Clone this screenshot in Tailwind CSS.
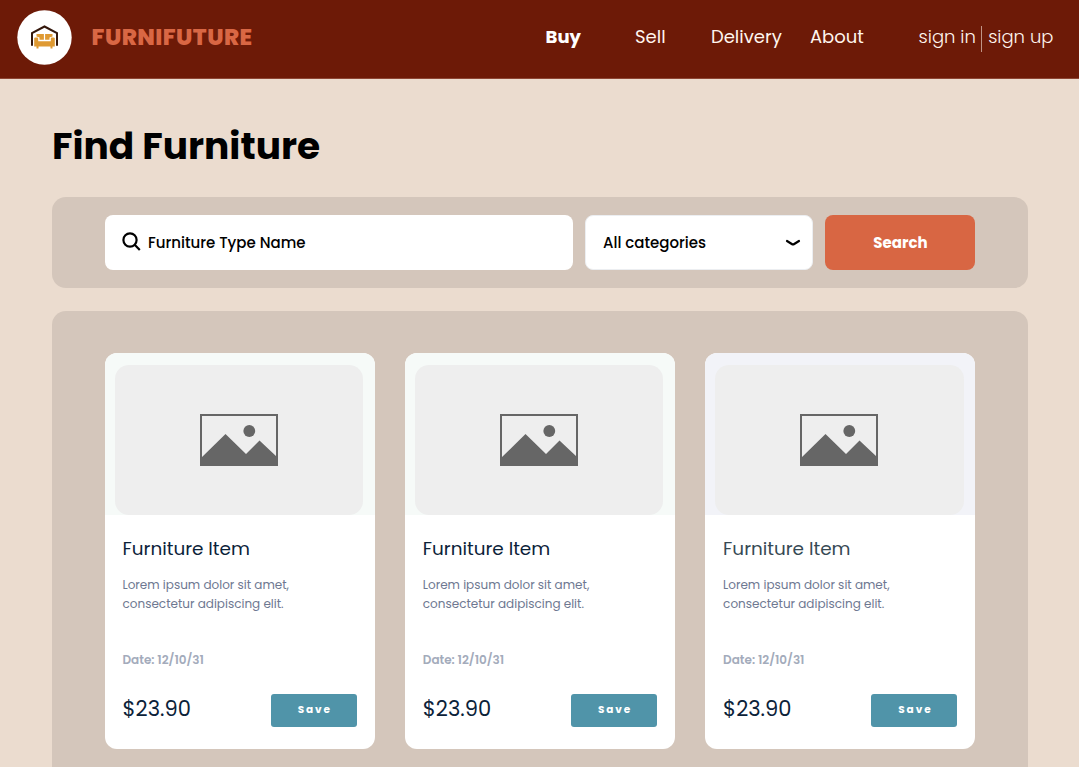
<!DOCTYPE html>
<html lang="en">
<head>
<meta charset="utf-8">
<title>Furnifuture</title>
<script src="https://cdn.jsdelivr.net/npm/@tailwindcss/browser@4"></script>
</head>
<body class="h-[767px] overflow-hidden bg-[#ebdccf] font-['Poppins','Inter',sans-serif] text-black">
<svg class="hidden">
  <symbol id="picture" viewBox="0 0 78 52">
    <rect x="1" y="1" width="76" height="50" fill="none" stroke="#666" stroke-width="2"/>
    <path d="M1 44L25.5 20L46 40L59.500 26.500L77 43V51H1Z" fill="#666"/>
    <circle cx="49.300" cy="17" r="5.900" fill="#666"/>
  </symbol>
</svg>

<header class="flex h-[79px] items-start border-b border-[#8d4634] bg-[#6d1a07] text-[18px] leading-[30px] whitespace-nowrap text-[#fff5ee]">
  <svg class="mt-[10px] ml-[17px] h-[55px] w-[55px] shrink-0" viewBox="0 0 55 55">
    <circle cx="27.500" cy="27.500" r="27.200" fill="#fff"/>
    <g transform="translate(11 10)">
      <path d="M4 25.800V13L16.500 6.500L29 13V25.800" fill="none" stroke="#34180c" stroke-width="2"/>
      <path d="M8.500 14H15.900V19.800H11.500V17.500L8.500 16.500ZM17.100 14H24.500V16.500L21.500 17.500V19.800H17.100Z" fill="#df9a33"/>
      <path d="M6.200 18.300Q6.200 17.500 7.500 17.500H9.200Q10.200 17.500 10.200 18.500V21.200H22.800V18.500Q22.800 17.500 23.800 17.500H25.500Q26.800 17.500 26.800 18.300V26.500H24.500V28.600H22.500V26.500H10.500V28.600H8.500V26.500H6.200Z" fill="#df9a33"/>
    </g>
  </svg>
  <div class="mt-[22px] ml-[19.600px] w-[454px] text-[23px] font-extrabold tracking-[0.4px] text-[#d96744]">FURNIFUTURE</div>
  <nav class="mt-[22px] flex">
    <a class="w-[89.400px] font-bold text-white">Buy</a>
    <a class="w-[76px]">Sell</a>
    <a class="w-[99px]">Delivery</a>
    <a class="w-[108.600px]">About</a>
    <a class="w-[62.400px] font-light">sign in</a>
    <span class="mt-1 h-[26px] w-px bg-[#c09486]"></span>
    <a class="ml-[6.200px] font-light">sign up</a>
  </nav>
</header>

<main class="pt-[43px] pr-[51px] pl-[52px]">
  <h1 class="h-[75px] text-[37.500px] leading-[49px] font-bold">Find Furniture</h1>

  <form class="flex h-[91px] items-center gap-3 rounded-[14px] bg-[#d4c6bb] px-[53px] text-[15px] font-medium">
    <div class="flex h-[55px] w-[468px] items-center rounded-lg bg-white pl-[17px]">
      <svg class="mb-px h-[20px] w-[20px]" viewBox="0 0 20 20" fill="none" stroke="#000" stroke-width="2.200"><circle cx="8" cy="8" r="6.600"/><path d="M12.700 12.700L17.800 18"/></svg>
      <span class="ml-[6px] pt-px">Furniture Type Name</span>
    </div>
    <div class="flex h-[55px] w-[228px] items-center justify-between rounded-lg border border-[#eceef1] bg-white pr-[11px] pl-[17px]">
      <span class="pt-px">All categories</span>
      <svg class="h-[8px] w-[16px]" viewBox="0 0 16 8" fill="none" stroke="#000" stroke-width="2.200" stroke-linecap="round" stroke-linejoin="round"><path d="M2 2L7.200 5.200Q8 5.700 8.800 5.200L14 2"/></svg>
    </div>
    <button type="button" class="h-[55px] w-[150px] rounded-lg bg-[#d86643] pt-px pl-px font-bold text-white">Search</button>
  </form>

  <section class="mt-[23.400px] flex h-[455.600px] gap-[30px] rounded-t-[14px] bg-[#d4c6bb] px-[52.500px] pt-[41.600px]">
    <article class="h-[396px] w-[270.300px] shrink-0 overflow-hidden rounded-xl bg-white">
      <div class="h-[162px] bg-[#f6faf8] pt-3 pl-[10px]">
        <div class="flex h-[150px] w-[248.700px] items-center justify-center rounded-[14px] bg-[#eee]"><svg class="h-[52px] w-[78px]"><use href="#picture"/></svg></div>
      </div>
      <div class="px-[18px] pt-[22px]">
        <h2 class="text-[18.400px] leading-6 text-[#0b2239]">Furniture Item</h2>
        <p class="mt-[14px] text-[12px] leading-[19px] text-[#6e7891]">Lorem ipsum dolor sit amet,<br>consectetur adipiscing elit.</p>
        <p class="mt-[37px] text-[12px] leading-5 font-semibold text-[#a3abbb]">Date: 12/10/31</p>
        <div class="mt-[24px] flex items-center justify-between">
          <span class="-mt-1 text-[21px] text-[#0b2239]">$23.90</span>
          <button class="h-[33px] w-[86px] rounded-[3px] bg-[#5094a9] pb-px pl-[2px] text-[10.500px] font-bold tracking-[1.900px] text-white">Save</button>
        </div>
      </div>
    </article>
    <article class="h-[396px] w-[270.300px] shrink-0 overflow-hidden rounded-xl bg-white">
      <div class="h-[162px] bg-[#f6faf8] pt-3 pl-[10px]">
        <div class="flex h-[150px] w-[248.700px] items-center justify-center rounded-[14px] bg-[#eee]"><svg class="h-[52px] w-[78px]"><use href="#picture"/></svg></div>
      </div>
      <div class="px-[18px] pt-[22px]">
        <h2 class="text-[18.400px] leading-6 text-[#0b2239]">Furniture Item</h2>
        <p class="mt-[14px] text-[12px] leading-[19px] text-[#6e7891]">Lorem ipsum dolor sit amet,<br>consectetur adipiscing elit.</p>
        <p class="mt-[37px] text-[12px] leading-5 font-semibold text-[#a3abbb]">Date: 12/10/31</p>
        <div class="mt-[24px] flex items-center justify-between">
          <span class="-mt-1 text-[21px] text-[#0b2239]">$23.90</span>
          <button class="h-[33px] w-[86px] rounded-[3px] bg-[#5094a9] pb-px pl-[2px] text-[10.500px] font-bold tracking-[1.900px] text-white">Save</button>
        </div>
      </div>
    </article>
    <article class="h-[396px] w-[270.300px] shrink-0 overflow-hidden rounded-xl bg-white">
      <div class="h-[162px] bg-[#f2f3f8] pt-3 pl-[10px]">
        <div class="flex h-[150px] w-[248.700px] items-center justify-center rounded-[14px] bg-[#eee]"><svg class="h-[52px] w-[78px]"><use href="#picture"/></svg></div>
      </div>
      <div class="px-[18px] pt-[22px]">
        <h2 class="text-[18.400px] leading-6 text-[#364954]">Furniture Item</h2>
        <p class="mt-[14px] text-[12px] leading-[19px] text-[#6e7891]">Lorem ipsum dolor sit amet,<br>consectetur adipiscing elit.</p>
        <p class="mt-[37px] text-[12px] leading-5 font-semibold text-[#a3abbb]">Date: 12/10/31</p>
        <div class="mt-[24px] flex items-center justify-between">
          <span class="-mt-1 text-[21px] text-[#0b2239]">$23.90</span>
          <button class="h-[33px] w-[86px] rounded-[3px] bg-[#5094a9] pb-px pl-[2px] text-[10.500px] font-bold tracking-[1.900px] text-white">Save</button>
        </div>
      </div>
    </article>
  </section>
</main>
</body>
</html>
